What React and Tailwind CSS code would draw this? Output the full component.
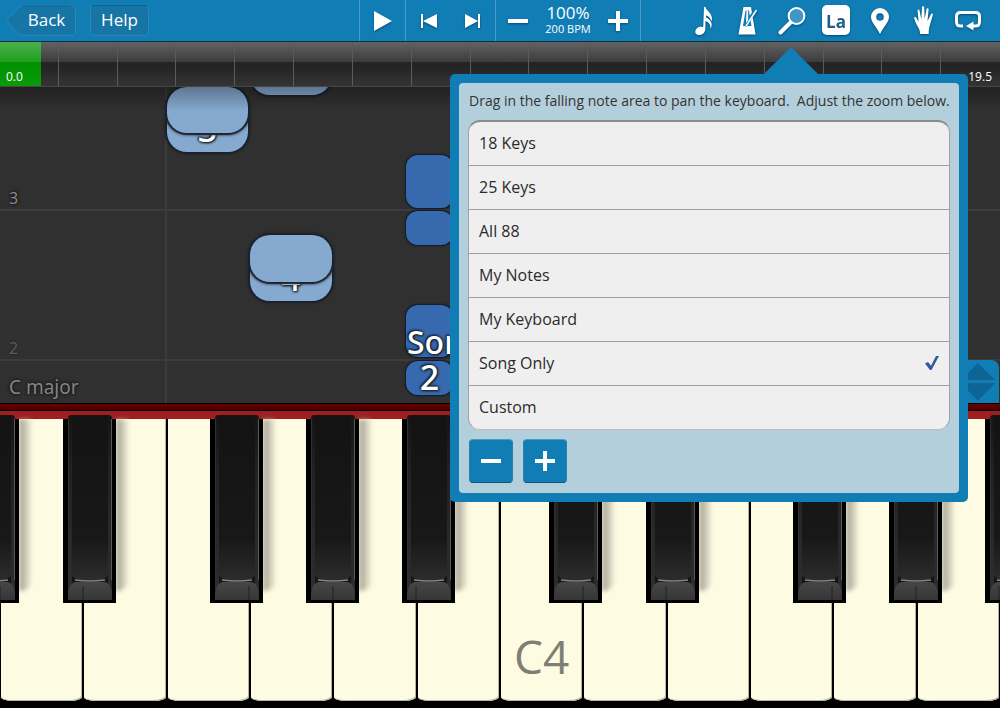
import { useState } from 'react';

const ZOOM_OPTIONS = ['18 Keys', '25 Keys', 'All 88', 'My Notes', 'My Keyboard', 'Song Only', 'Custom'];

const WHITE_KEYS = ['D3', 'E3', 'F3', 'G3', 'A3', 'B3', 'C4', 'D4', 'E4', 'F4', 'G4', 'A4'];

// left edge in thousandths of the keyboard, seam = where the white keys meet under it
const BLACK_KEYS = [
  { left: -34, seam: 34 },
  { left: 63, seam: 20 },
  { left: 210, seam: 39 },
  { left: 306, seam: 27 },
  { left: 402, seam: 14 },
  { left: 549, seam: 34 },
  { left: 646, seam: 20 },
  { left: 793, seam: 39 },
  { left: 889, seam: 27 },
  { left: 985, seam: 14 },
];

// drawn in order, later notes cover earlier ones
const NOTES = [
  { left: 250, width: 82, top: -40, height: 48, hand: 'right' },
  { left: 167, width: 81, top: 17, height: 48, hand: 'right', label: '3' },
  { left: 167, width: 81, top: 0, height: 46, hand: 'right' },
  { left: 250, width: 82, top: 166, height: 48, hand: 'right', label: '4' },
  { left: 250, width: 82, top: 148, height: 47, hand: 'right' },
  { left: 406, width: 47, top: 68, height: 53, hand: 'left' },
  { left: 406, width: 47, top: 124, height: 34, hand: 'left' },
  { left: 406, width: 47, top: 218, height: 52, hand: 'left' },
  { left: 406, width: 47, top: 274, height: 34, hand: 'left', label: '2' },
];

const OUTLINE = '[text-shadow:0_0_3px_#1b2530,0_0_3px_#1b2530,1px_1px_2px_#1b2530,-1px_-1px_2px_#1b2530]';

function ToolButton({ label, children }) {
  return (
    <button aria-label={label} className="w-11 h-full flex items-center justify-center text-white drop-shadow-[0_1px_1px_rgba(0,40,70,0.6)]">
      {children}
    </button>
  );
}

function Minus() {
  return (
    <svg width="20" height="20" viewBox="0 0 20 20" fill="currentColor">
      <rect y="8" width="20" height="4" />
    </svg>
  );
}

function Plus() {
  return (
    <svg width="20" height="20" viewBox="0 0 20 20" fill="currentColor">
      <path d="M8 0h4v8h8v4h-8v8H8v-8H0V8h8z" />
    </svg>
  );
}

function Toolbar() {
  return (
    <header className="h-[42px] grid grid-cols-[1fr_auto_1fr] bg-[#117db5] border-b border-[#0d2c3d] text-white">
      <div className="flex items-center gap-[14px] pl-[7px] pb-px">
        <button className="relative w-[69px] h-[31px] pl-[10px] text-[17px] leading-5 font-medium">
          <svg className="absolute inset-0" width="69" height="31" viewBox="0 0 69 31">
            <path d="M15 .5H64Q68.500 .5 68.500 5V26Q68.500 30.500 64 30.500H15Q13 30.500 11 28L1.500 18Q-.5 15.500 1.500 13L11 3Q13 .5 15 .5Z" fill="#1775a6" stroke="#2b88b8" />
            <path d="M15 1H64" stroke="#0f628f" />
          </svg>
          <span className="relative">Back</span>
        </button>
        <button className="w-[59px] h-[31px] rounded-[5px] bg-[#1775a6] border border-[#2b88b8] border-t-[#0f628f] text-[17px] leading-5 font-medium">
          Help
        </button>
      </div>

      <div className="flex">
        <div className="w-[46px] flex justify-center border-l border-[#4a9cc6]">
          <ToolButton label="Play">
            <svg width="18" height="20" viewBox="0 0 18 20" fill="currentColor"><path d="M0 0l18 10L0 20z" /></svg>
          </ToolButton>
        </div>
        <div className="w-[90px] flex justify-end border-l border-[#4a9cc6]">
          <ToolButton label="Previous">
            <svg width="16" height="14" viewBox="0 0 16 14" fill="currentColor"><path d="M0 0h2v14H0zM16 0v14L2 7z" /></svg>
          </ToolButton>
          <ToolButton label="Next">
            <svg width="16" height="14" viewBox="0 0 16 14" fill="currentColor"><path d="M13 0h2v14h-2zM0 0v14l13-7z" /></svg>
          </ToolButton>
        </div>
        <div className="flex border-x border-[#4a9cc6]">
          <ToolButton label="Slower"><Minus /></ToolButton>
          <div className="w-14 pt-[3px] text-center">
            <div className="text-[17px] leading-5">100%</div>
            <div className="text-[11px] leading-3 whitespace-nowrap">200 BPM</div>
          </div>
          <ToolButton label="Faster"><Plus /></ToolButton>
        </div>
      </div>

      <div className="flex justify-end pr-[10px]">
        <ToolButton label="Note display">
          <svg width="18" height="30" viewBox="0 0 18 30" fill="currentColor">
            <path d="M9 1h1.500c.4 3.500 6.800 6 6.500 12-.1 1-.5 1.800-1 2.300.1-3-2.700-5-5-6v2c3 1.800 6.600 4.600 5.500 9-.2.900-.6 1.700-1.200 2.400.8-4-1.800-6.500-4.800-7.600L10.200 24c-.4 3-3.400 5-6.200 5-2.500 0-4-1.600-3.700-3.600.3-2.600 3.200-4.600 5.900-4.600.8 0 1.500.2 2 .5z" />
          </svg>
        </ToolButton>
        <ToolButton label="Metronome">
          <svg width="20" height="30" viewBox="0 0 20 30">
            <path d="M5.500 1h7.500l4.500 27.500h-17z" fill="#fff" />
            <path d="M7.500 4.500h3.500l2.500 15.500H5z" fill="#117db5" />
            <path d="M7 20L18 3.500" stroke="#117db5" strokeWidth="3.500" />
            <path d="M8 20L18.500 4" stroke="#fff" strokeWidth="1.500" />
            <path d="M8.500 4.500h1.600V14L8 17z" fill="#fff" />
          </svg>
        </ToolButton>
        <ToolButton label="Zoom">
          <svg width="28" height="30" viewBox="0 0 28 30">
            <circle cx="18.500" cy="10" r="7.900" fill="#3f97c6" stroke="#fff" strokeWidth="2" />
            <path d="M12.500 16.500L2.500 26.500" stroke="#fff" strokeWidth="4" strokeLinecap="round" />
          </svg>
        </ToolButton>
        <ToolButton label="Note labels">
          <span className="w-7 h-[30px] mb-0.5 rounded-[5px] bg-white text-[#1d5f8a] text-[17px] leading-[34px] font-bold">La</span>
        </ToolButton>
        <ToolButton label="Bookmarks">
          <svg width="18" height="26" viewBox="0 0 18 26" fill="currentColor">
            <path fillRule="evenodd" d="M9 0a9 9 0 0 1 9 9c0 5-5 9-9 17C5 18 0 14 0 9a9 9 0 0 1 9-9zm0 5.200a3.800 3.800 0 1 0 0 7.600 3.800 3.800 0 0 0 0-7.600z" />
          </svg>
        </ToolButton>
        <ToolButton label="Hands">
          <svg width="20" height="29" viewBox="0 0 20 29" fill="currentColor">
            <path d="M6 28c.2-3-.8-5-2.300-7.500C2.200 18 .6 14.500.2 12.300c-.2-1.300 1.300-1.700 2-.6l2.400 4L3.600 5c-.1-1.700 1.700-1.900 2-.3l1.700 8.500L8 1.500C8.100-.3 10.100-.3 10.200 1.500l.5 11.500 1.800-9.800c.3-1.600 2.300-1.300 2.100.4L13.500 15l3.500-6.800c.7-1.400 2.300-.7 1.800.8L16.500 17c-1 3.500-2 6-1.800 11z" />
          </svg>
        </ToolButton>
        <ToolButton label="Loop">
          <svg width="26" height="20" viewBox="0 0 26 20">
            <path d="M8 15H5.500Q1.500 15 1.500 11V5.500Q1.500 1.500 5.500 1.500h15Q24.500 1.500 24.500 5.500V11Q24.500 15 20.500 15H17" fill="none" stroke="#fff" strokeWidth="3" />
            <path d="M11 15l7.500-4.500v9z" fill="#fff" />
          </svg>
        </ToolButton>
      </div>
    </header>
  );
}

function Timeline() {
  return (
    <div className="relative h-[45px] bg-[linear-gradient(#636363,#3c3c3c_45%,#252525_46%,#232323_55%,#343434)] border-b border-[#454545]">
      <div className="h-full grid grid-cols-17">
        {Array.from({ length: 17 }, (_, i) => (
          <div key={i} className="border-r border-[#5a5a5a] last:border-r-0" />
        ))}
      </div>
      <div className="absolute inset-y-0 left-0 w-[41px] bg-[linear-gradient(#4bb04b,#1f9f1f_45%,#009200_46%,#0a9a0a)]" />
      <div className="absolute inset-x-0 bottom-[3px] flex justify-between pl-[6px] pr-2 text-[12px] leading-3 text-white">
        <span>0.0</span>
        <span>19.5</span>
      </div>
    </div>
  );
}

function Note({ note }) {
  const look = note.hand === 'right'
    ? 'pb-[5px] bg-[#86a9cf] rounded-[20px] shadow-[0_0_0_2px_rgba(28,34,44,0.8),0_0_3px_2px_#1c222c]'
    : 'bg-[#3769ae] rounded-[12px] shadow-[0_0_0_1px_#171c26,0_0_2px_1px_#171c26]';
  return (
    <div
      className={`absolute flex items-end justify-center text-[34px] leading-9 text-white font-medium ${look}`}
      style={{ left: `${note.left / 10}%`, width: `${note.width / 10}%`, top: note.top, height: note.height }}
    >
      {note.label && <span className={OUTLINE}>{note.label}</span>}
    </div>
  );
}

function FallingNotes() {
  return (
    <main className="relative h-[316px] overflow-hidden bg-[#303030] font-['Noto_Sans',sans-serif]">
      <div className="absolute inset-y-0 left-[16.5%] w-[2px] bg-[#3c3c3c]" />
      <div className="absolute inset-x-0 top-[122px] h-[2px] bg-[#3c3c3c]" />
      <div className="absolute inset-x-0 top-[272px] h-[2px] bg-[#3c3c3c]" />
      <span className="absolute left-[9px] top-[101px] text-[16px] leading-5 text-[#8a8a8a] [text-shadow:0_0_3px_#111,0_0_3px_#111]">3</span>
      <span className="absolute left-[9px] top-[251px] text-[16px] leading-5 text-[#5c5c5c] [text-shadow:0_0_2px_#222]">2</span>
      <span className="absolute left-[9px] top-[288px] text-[19px] leading-6 text-[#848484] [text-shadow:0_0_3px_#151515,0_0_3px_#151515]">C major</span>
      {NOTES.map((note, i) => <Note key={i} note={note} />)}
      <span className={`absolute left-[40.7%] top-[237px] text-[32px] leading-9 text-white font-medium ${OUTLINE}`}>Son</span>
      <div className="absolute inset-x-0 top-0 h-6 bg-linear-to-b from-black/30 to-transparent" />

      <button aria-label="Resize keyboard" className="absolute right-px bottom-0 w-[42px] h-[43px] rounded-t-lg bg-[#117db5]">
        <svg width="42" height="43" viewBox="0 0 42 43" fill="#0e6595">
          <path d="M21 3l17 17H4zM4 23h34L21 41z" />
        </svg>
      </button>
    </main>
  );
}

function BlackKey({ left, seam }) {
  return (
    <div className="absolute -top-1 w-[5.3%] h-[188px]" style={{ left: `${left / 10}%` }}>
      <div className="absolute left-full top-1 h-[172px] w-[12px] bg-linear-to-r from-[#a09e8f] to-[#d8d6c2]/40 rounded-br-[10px] blur-[2px]" />
      <svg className="absolute inset-0 w-full h-full" viewBox="0 0 53 188" preserveAspectRatio="none">
        <rect y="4" width="53" height="184" fill="#000" />
        <path d="M5 185V4Q5 0 8 0H46Q49 0 49 4V185z" fill="url(#keySide)" />
        <path d="M48.500 4V165" stroke="#585858" strokeWidth="1" />
        <path d="M5.500 4V165" stroke="#303030" strokeWidth="1" />
        <path d="M9 1H45V158Q43 165 38 165H16Q11 165 9 158z" fill="url(#keyFace)" />
        <path d="M9 160Q12 165 17 165H37Q42 165 45 160V170H9z" fill="#161616" />
        <path d="M5 185V178Q7 167 13 167H41Q47 167 49 178V185z" fill="url(#keyFront)" />
        <path d="M12 165Q27 167 42 165" stroke="#858585" strokeWidth="1.500" fill="none" />
        <path d={`M${seam} 171V185`} stroke="#222" strokeWidth="1" />
      </svg>
    </div>
  );
}

function Keyboard() {
  return (
    <section className="flex-1 flex flex-col overflow-hidden bg-black">
      <svg className="absolute w-0 h-0" aria-hidden="true">
        <defs>
          <linearGradient id="keyFace" x1="0" y1="0" x2="0" y2="1">
            <stop offset="0" stopColor="#131313" />
            <stop offset="0.75" stopColor="#181818" />
            <stop offset="1" stopColor="#2c2c2c" />
          </linearGradient>
          <linearGradient id="keySide" x1="0" y1="0" x2="0" y2="1">
            <stop offset="0" stopColor="#151515" />
            <stop offset="0.3" stopColor="#222" />
            <stop offset="1" stopColor="#2e2e2e" />
          </linearGradient>
          <linearGradient id="keyFront" x1="0" y1="0" x2="0" y2="1">
            <stop offset="0" stopColor="#464646" />
            <stop offset="1" stopColor="#363636" />
          </linearGradient>
        </defs>
      </svg>
      <div className="h-2 bg-linear-to-b from-[#6d0000] to-[#450000] border-y border-black" />
      <div className="h-2 bg-[#a01e20]" />
      <div className="relative flex-1 min-h-[240px] grid grid-cols-12 pb-[7px]">
        {WHITE_KEYS.map((name) => (
          <button
            key={name}
            aria-label={name}
            className="mx-px flex items-end justify-center pb-[17px] rounded-b-[12px_4px] bg-[#fefbe3] shadow-[inset_-1px_-1px_0_#b5b4a2] text-[46px] leading-[56px] text-[#7f7e72]"
          >
            {name === 'C4' && name}
          </button>
        ))}
        {BLACK_KEYS.map((key) => <BlackKey key={key.left} {...key} />)}
      </div>
    </section>
  );
}

function ZoomPopover() {
  const [selected, setSelected] = useState('Song Only');

  return (
    <div className="absolute right-8 top-[74px] w-[518px] p-[9px] rounded-[5px] bg-[#117db5]">
      <svg className="absolute right-[150px] bottom-full" width="54" height="27" viewBox="0 0 54 27" fill="#117db5">
        <path d="M27 0l27 27H0z" />
      </svg>
      <div className="rounded-[4px] bg-[#b3cfdb] px-[9px] pt-2 pb-[10px]">
        <p className="pl-px text-[14px] leading-5 text-[#333] whitespace-nowrap">
          Drag in the falling note area to pan the keyboard.&nbsp; Adjust the zoom below.
        </p>
        <ul className="mt-[9px] rounded-[12px] bg-[#efefef] border border-[#a3a3a3] border-t-2 border-t-[#8b8b8b] border-b-[#bdbdbd] divide-y divide-[#9f9f9f] overflow-hidden">
          {ZOOM_OPTIONS.map((option) => (
            <li key={option}>
              <button
                onClick={() => setSelected(option)}
                className="w-full h-[43px] px-[10px] pb-0.5 flex items-center justify-between text-[16px] leading-5 font-medium text-[#2b2b2b]"
              >
                {option}
                {option === selected && (
                  <svg width="14" height="14" viewBox="0 0 14 14" fill="#35589c">
                    <path d="M0 7.500L3 6l3 3.800L11 0h3L6.500 14H5z" />
                  </svg>
                )}
              </button>
            </li>
          ))}
        </ul>
        <div className="mt-[9px] pl-px flex gap-[10px]">
          <button aria-label="Zoom out" className="w-11 h-11 flex items-center justify-center rounded-[4px] bg-[#117db5] border border-t-[#4a9cc6] border-x-[#2a7fae] border-b-[#0a5682] text-white">
            <Minus />
          </button>
          <button aria-label="Zoom in" className="w-11 h-11 flex items-center justify-center rounded-[4px] bg-[#117db5] border border-t-[#4a9cc6] border-x-[#2a7fae] border-b-[#0a5682] text-white">
            <Plus />
          </button>
        </div>
      </div>
    </div>
  );
}

export default function App() {
  return (
    <div className="relative min-h-screen flex flex-col overflow-hidden bg-black font-['Open_Sans','Noto_Sans',sans-serif]">
      <Toolbar />
      <Timeline />
      <FallingNotes />
      <Keyboard />
      <ZoomPopover />
    </div>
  );
}
